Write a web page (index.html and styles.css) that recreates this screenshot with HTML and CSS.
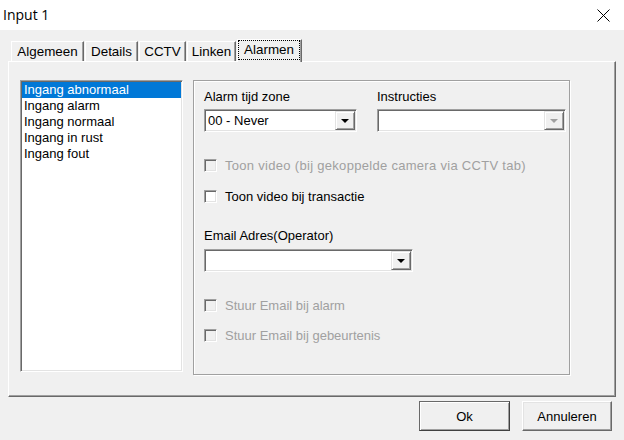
FILE: index.html
```html
<!DOCTYPE html>
<html>
<head>
<meta charset="utf-8">
<title>Input 1</title>
<link rel="stylesheet" href="styles.css">
</head>
<body>
<div class="window">
  <div class="titlebar">
    <span class="title">Input 1</span>
    <span class="close"><svg width="13" height="13" viewBox="0 0 13 13"><path d="M0.5 0.5 L12.5 12.5 M12.5 0.5 L0.5 12.5" stroke="#000" stroke-width="1" fill="none"/></svg></span>
  </div>
  <div class="client">
    <div class="tabs">
      <div class="tab t1">Algemeen</div>
      <div class="tab t2">Details</div>
      <div class="tab t3">CCTV</div>
      <div class="tab t4">Linken</div>
      <div class="tab sel"><span class="focus">Alarmen</span></div>
    </div>
    <div class="panel">
      <div class="listbox">
        <div class="item selected">Ingang abnormaal</div>
        <div class="item">Ingang alarm</div>
        <div class="item">Ingang normaal</div>
        <div class="item">Ingang in rust</div>
        <div class="item">Ingang fout</div>
      </div>
      <div class="group">
        <div class="row2">
          <div class="field f1">
            <div class="label">Alarm tijd zone</div>
            <div class="combo"><span class="value">00 - Never</span><span class="drop"><i class="arrow"></i></span></div>
          </div>
          <div class="field f2">
            <div class="label">Instructies</div>
            <div class="combo"><span class="value"></span><span class="drop"><i class="arrow dis"></i></span></div>
          </div>
        </div>
        <div class="check disabled c1"><span class="box"></span><span class="ctext">Toon video (bij gekoppelde camera via CCTV tab)</span></div>
        <div class="check c2"><span class="box"></span><span class="ctext">Toon video bij transactie</span></div>
        <div class="label email">Email Adres(Operator)</div>
        <div class="combo c3"><span class="value"></span><span class="drop"><i class="arrow"></i></span></div>
        <div class="check disabled c3b"><span class="box"></span><span class="ctext">Stuur Email bij alarm</span></div>
        <div class="check disabled c4"><span class="box"></span><span class="ctext">Stuur Email bij gebeurtenis</span></div>
      </div>
    </div>
    <div class="buttons">
      <div class="btn ok">Ok</div>
      <div class="btn cancel">Annuleren</div>
    </div>
  </div>
</div>
</body>
</html>
```

FILE: styles.css
```css
html, body {
  margin: 0;
  padding: 0;
}
body {
  width: 624px;
  height: 440px;
  background: #f0f0f0;
  font-family: "Liberation Sans", Arial, sans-serif;
  font-size: 13px;
  color: #000;
  overflow: hidden;
}
.window {
  width: 624px;
  height: 440px;
}
.titlebar {
  height: 30px;
  background: #fff;
  display: flex;
  align-items: center;
  justify-content: space-between;
  padding: 0 14px 0 3px;
  box-sizing: border-box;
}
.title {
  font-family: "Open Sans", "Noto Sans", sans-serif;
  font-size: 14px;
  line-height: 30px;
  color: #000;
}
.close {
  display: flex;
  width: 13px;
  height: 13px;
}
.client {
  padding-top: 9px;
}
.tabs {
  display: flex;
  align-items: flex-start;
  height: 22px;
  margin-left: 8px;
}
.tab {
  box-sizing: border-box;
  height: 20px;
  margin-top: 2px;
  margin-left: 1px;
  background: #f0f0f0;
  border-top: 1px solid #fff;
  border-left: 1px solid #fff;
  border-right: 1px solid #696969;
  box-shadow: inset -1px 0 #a0a0a0;
  text-align: center;
  line-height: 19px;
  font-size: 13.4px;
}
.t1 { width: 73px; margin-left: 3px; }
.t2 { width: 53px; }
.t3 { width: 47px; }
.t4 { width: 49px; }
.sel {
  width: 65px;
  height: 23px;
  margin-top: 0;
  margin-left: 1px;
  position: relative;
  z-index: 1;
  display: flex;
  align-items: flex-start;
}
.focus {
  display: block;
  box-sizing: border-box;
  height: 20px;
  width: 62px;
  border: 1px dotted #000;
  line-height: 17px;
  text-align: center;
}
.panel {
  box-sizing: border-box;
  margin-left: 8px;
  width: 608px;
  height: 336px;
  border: 1px solid;
  border-color: #fff #696969 #696969 #fff;
  box-shadow: inset -1px -1px #a0a0a0;
  padding: 18px 0 0 11px;
  display: flex;
  align-items: flex-start;
}
.listbox {
  box-sizing: border-box;
  width: 163px;
  height: 292px;
  background: #fff;
  border: 1px solid;
  border-color: #a0a0a0 #fff #fff #a0a0a0;
  box-shadow: inset 1px 1px #696969, inset -1px -1px #e3e3e3;
  padding: 1px;
}
.item {
  height: 16px;
  line-height: 16px;
  padding-left: 2px;
  white-space: nowrap;
}
.item.selected {
  background: #0078d7;
  color: #fff;
}
.group {
  box-sizing: border-box;
  margin-left: 10px;
  width: 377px;
  height: 295px;
  border: 1px solid #a0a0a0;
  box-shadow: inset 1px 1px #fff, 1px 1px #fff;
  padding: 8px 0 0 10px;
}
.row2 {
  display: flex;
  gap: 20px;
}
.f1 { width: 153px; }
.f2 { width: 189px; }
.label {
  height: 16px;
  line-height: 16px;
  white-space: nowrap;
}
.combo {
  box-sizing: border-box;
  height: 23px;
  margin-top: 4px;
  background: #fff;
  border: 1px solid;
  border-color: #a0a0a0 #fff #fff #a0a0a0;
  box-shadow: inset 1px 1px #696969, inset -1px -1px #e3e3e3;
  padding: 1px;
  display: flex;
  align-items: stretch;
}
.value {
  flex: 1;
  line-height: 19px;
  padding-left: 2px;
  white-space: nowrap;
}
.drop {
  box-sizing: border-box;
  width: 20px;
  background: #f0f0f0;
  border: 1px solid;
  border-color: #e3e3e3 #696969 #696969 #e3e3e3;
  box-shadow: inset 1px 1px #fff, inset -1px -1px #a0a0a0;
  display: flex;
  align-items: center;
  justify-content: center;
}
.arrow {
  display: block;
  width: 0;
  height: 0;
  border-left: 4px solid transparent;
  border-right: 4px solid transparent;
  border-top: 4px solid #000;
  margin-top: 1px;
}
.arrow.dis {
  border-top-color: #a0a0a0;
}
.check {
  display: flex;
  align-items: flex-start;
  height: 16px;
  white-space: nowrap;
}
.box {
  box-sizing: border-box;
  width: 13px;
  height: 13px;
  margin-top: 1px;
  margin-right: 8px;
  background: #fff;
  border: 1px solid;
  border-color: #a0a0a0 #fff #fff #a0a0a0;
  box-shadow: inset 1px 1px #696969, inset -1px -1px #e3e3e3;
}
.ctext {
  line-height: 16px;
}
.check.disabled .box {
  background: #f0f0f0;
}
.check.disabled .ctext {
  color: #a0a0a0;
}
.c1 .ctext { letter-spacing: 0.3px; }
.c1 { margin-top: 26px; }
.c2 { margin-top: 15px; }
.email { margin-top: 23px; }
.combo.c3 { width: 209px; margin-top: 5px; }
.c3b { margin-top: 26px; }
.c4 { margin-top: 14px; }
.buttons {
  display: flex;
  justify-content: flex-end;
  gap: 12px;
  padding-right: 12px;
  margin-top: 4px;
}
.btn {
  box-sizing: border-box;
  width: 90px;
  height: 30px;
  background: #f0f0f0;
  border: 1px solid;
  border-color: #fff #696969 #696969 #fff;
  box-shadow: inset -1px -1px #a0a0a0, inset 1px 1px #e3e3e3;
  display: flex;
  align-items: center;
  justify-content: center;
}
.btn.ok {
  width: 91px;
  border-color: #696969 #404040 #404040 #696969;
  box-shadow: inset 1px 1px #fff, inset -1px -1px #a0a0a0;
}
```
